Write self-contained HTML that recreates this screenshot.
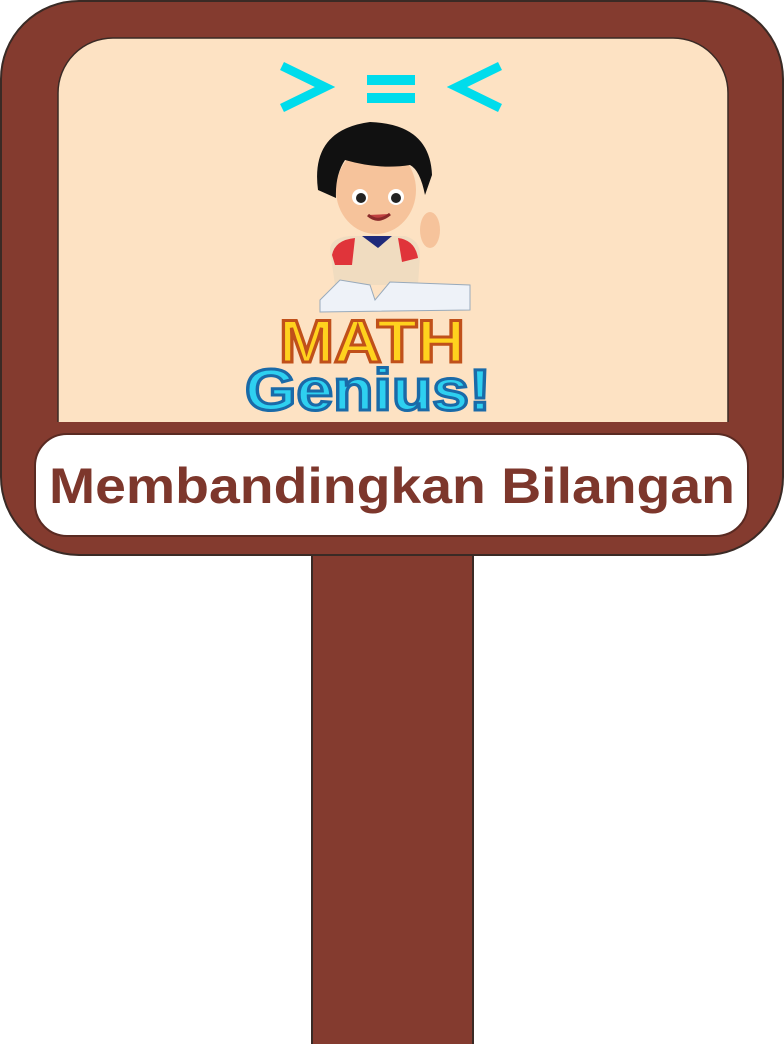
<!DOCTYPE html>
<html><head><meta charset="utf-8"><style>
html,body{margin:0;padding:0;background:#fff;width:784px;height:1044px;overflow:hidden}
svg{display:block}
</style></head><body>
<svg width="784" height="1044" viewBox="0 0 784 1044" xmlns="http://www.w3.org/2000/svg">
<rect x="312" y="540" width="161" height="510" fill="#843b2f" stroke="#3a2a25" stroke-width="2"/>
<rect x="1" y="1" width="782" height="554" rx="78" fill="#843b2f" stroke="#3a2a25" stroke-width="2"/>
<path d="M58 425 L58 93 A55 55 0 0 1 113 38 L673 38 A55 55 0 0 1 728 93 L728 425 Z" fill="#fde2c3" stroke="#3a2a25" stroke-width="1.5"/>
<rect x="50" y="422" width="690" height="14" fill="#843b2f"/>
<rect x="35" y="434" width="713" height="102" rx="32" fill="#fff" stroke="#5a2a22" stroke-width="2"/>
<text x="392" y="503" text-anchor="middle" font-family="Liberation Sans, sans-serif" font-weight="bold" font-size="50" fill="#7d372c" textLength="686" lengthAdjust="spacingAndGlyphs">Membandingkan Bilangan</text>
<g fill="none" stroke="#00dcec" stroke-width="9">
<polyline points="282,66 325,87 282,108"/>
<polyline points="500,66 457,87 500,108"/>
</g>
<rect x="367" y="75" width="48" height="10" fill="#00dcec"/>
<rect x="367" y="93" width="48" height="10" fill="#00dcec"/>
<path d="M330 250 Q330 238 350 236 L405 236 Q420 240 420 255 L418 285 L335 285 Z" fill="#f0dcc0"/>
<path d="M332 255 Q335 240 355 238 L352 265 L335 265 Z" fill="#e0343a"/>
<path d="M398 238 Q415 240 418 258 L402 262 Z" fill="#e0343a"/>
<path d="M362 236 L378 248 L392 236 Z" fill="#1f2a7a"/>
<ellipse cx="376" cy="190" rx="40" ry="44" fill="#f6c39b"/>
<path d="M318 190 Q310 130 370 122 Q430 124 432 175 L425 195 Q420 170 410 165 Q380 170 345 160 Q335 175 336 198 Z" fill="#111"/>
<circle cx="360" cy="197" r="8" fill="#fff"/><circle cx="361" cy="198" r="5" fill="#222"/>
<circle cx="396" cy="197" r="8" fill="#fff"/><circle cx="396" cy="198" r="5" fill="#222"/>
<path d="M368 215 Q378 224 390 214" stroke="#8a2a2a" stroke-width="3" fill="#c04040"/>
<ellipse cx="430" cy="230" rx="10" ry="18" fill="#f6c39b"/>
<path d="M320 300 L340 280 L370 285 L375 300 L390 282 L470 285 L470 310 L320 312 Z" fill="#eef2f8" stroke="#9ab" stroke-width="1"/>
<text x="372" y="362" text-anchor="middle" font-family="Liberation Sans, sans-serif" font-weight="bold" font-size="60" fill="#ffd21e" stroke="#c0501a" stroke-width="3" textLength="186" lengthAdjust="spacingAndGlyphs">MATH</text>
<text x="368" y="410" text-anchor="middle" font-family="Liberation Sans, sans-serif" font-weight="bold" font-size="58" fill="#2ed0f0" stroke="#1a6aa8" stroke-width="3" textLength="246" lengthAdjust="spacingAndGlyphs">Genius!</text>
</svg>
</body></html>
